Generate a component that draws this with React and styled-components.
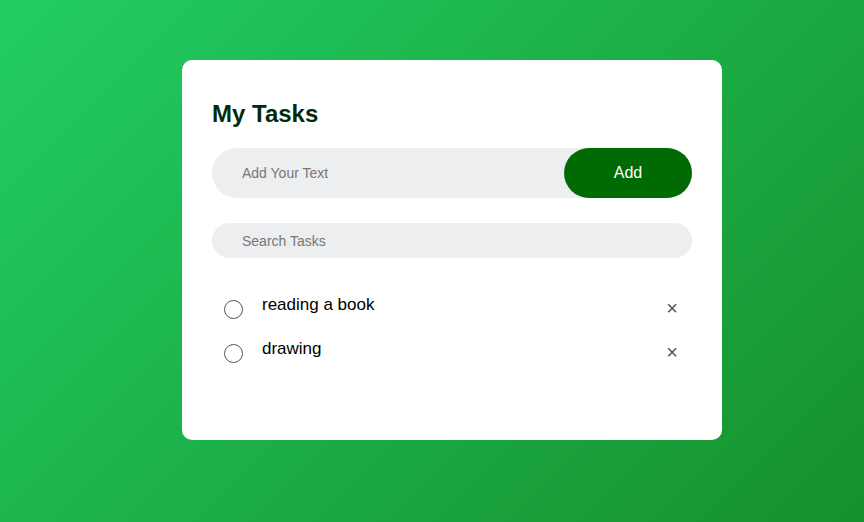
import React, { useState } from 'react';
import styled, { createGlobalStyle } from 'styled-components';

const GlobalStyle = createGlobalStyle`
  * {
    margin: 0;
    padding: 0;
    box-sizing: border-box;
  }
  body {
    font-family: 'Liberation Sans', Arial, sans-serif;
  }
`;

const Page = styled.div`
  width: 100%;
  min-height: 100vh;
  background: linear-gradient(135deg, #22cd64, #16902b);
  padding: 60px 0 0 40px;
  display: flex;
  justify-content: center;
  align-items: flex-start;
`;

const Card = styled.div`
  width: 540px;
  height: 380px;
  background: #fff;
  border-radius: 10px;
  padding: 40px 30px 30px;
`;

const Title = styled.h2`
  color: #002b0f;
  font-size: 24px;
  font-weight: bold;
  line-height: 28px;
  margin-bottom: 20px;
`;

const InputRow = styled.div`
  display: flex;
  align-items: center;
  background: #edeef0;
  border-radius: 30px;
  height: 50px;
  margin-bottom: 25px;
`;

const TextInput = styled.input`
  flex: 1;
  border: none;
  outline: none;
  background: transparent;
  padding-left: 30px;
  font-family: 'Liberation Sans', Arial, sans-serif;
  font-size: 14px;
  color: #333;

  &::placeholder {
    color: #777;
  }
`;

const AddButton = styled.button`
  border: none;
  outline: none;
  width: 128px;
  height: 50px;
  background: #006a04;
  color: #fff;
  font-family: 'Liberation Sans', Arial, sans-serif;
  font-size: 16px;
  border-radius: 40px;
  cursor: pointer;
`;

const SearchInput = styled.input`
  display: block;
  width: 100%;
  height: 35px;
  border: none;
  outline: none;
  background: #edeef0;
  border-radius: 30px;
  padding-left: 30px;
  font-family: 'Liberation Sans', Arial, sans-serif;
  font-size: 14px;
  color: #333;
  margin-bottom: 26px;

  &::placeholder {
    color: #777;
  }
`;

const List = styled.ul`
  list-style: none;
`;

const Item = styled.li`
  position: relative;
  display: flex;
  align-items: flex-start;
  height: 44px;
  padding: 11px 0 0 50px;
  font-size: 17px;
  color: #000;
  cursor: pointer;
  user-select: none;
`;

const Circle = styled.span`
  position: absolute;
  left: 12px;
  top: 16px;
  width: 19px;
  height: 19px;
  border-radius: 50%;
  border: 1.5px solid ${(props) => (props.checked ? '#006a04' : '#555')};
  background: ${(props) => (props.checked ? '#006a04' : 'transparent')};
`;

const Label = styled.span`
  text-decoration: ${(props) => (props.checked ? 'line-through' : 'none')};
  color: ${(props) => (props.checked ? '#555' : '#000')};
`;

const Remove = styled.span`
  position: absolute;
  right: 0;
  top: 4px;
  width: 40px;
  height: 40px;
  line-height: 40px;
  text-align: center;
  font-size: 20px;
  color: #555;
  border-radius: 50%;

  &:hover {
    background: #edeef0;
  }
`;

const App = () => {
  const [tasks, setTasks] = useState([
    { id: 1, text: 'reading a book', checked: false },
    { id: 2, text: 'drawing', checked: false },
  ]);
  const [text, setText] = useState('');
  const [search, setSearch] = useState('');

  const addTask = () => {
    if (!text.trim()) return;
    setTasks([...tasks, { id: Date.now(), text: text.trim(), checked: false }]);
    setText('');
  };

  const toggle = (id) =>
    setTasks(tasks.map((t) => (t.id === id ? { ...t, checked: !t.checked } : t)));

  const remove = (id) => setTasks(tasks.filter((t) => t.id !== id));

  const shown = tasks.filter((t) =>
    t.text.toLowerCase().includes(search.toLowerCase())
  );

  return (
    <>
      <GlobalStyle />
      <Page>
        <Card>
          <Title>My Tasks</Title>
          <InputRow>
            <TextInput
              placeholder="Add Your Text"
              value={text}
              onChange={(e) => setText(e.target.value)}
            />
            <AddButton onClick={addTask}>Add</AddButton>
          </InputRow>
          <SearchInput
            placeholder="Search Tasks"
            value={search}
            onChange={(e) => setSearch(e.target.value)}
          />
          <List>
            {shown.map((task) => (
              <Item key={task.id} onClick={() => toggle(task.id)}>
                <Circle checked={task.checked} />
                <Label checked={task.checked}>{task.text}</Label>
                <Remove
                  onClick={(e) => {
                    e.stopPropagation();
                    remove(task.id);
                  }}
                >
                  ×
                </Remove>
              </Item>
            ))}
          </List>
        </Card>
      </Page>
    </>
  );
};

export default App;
